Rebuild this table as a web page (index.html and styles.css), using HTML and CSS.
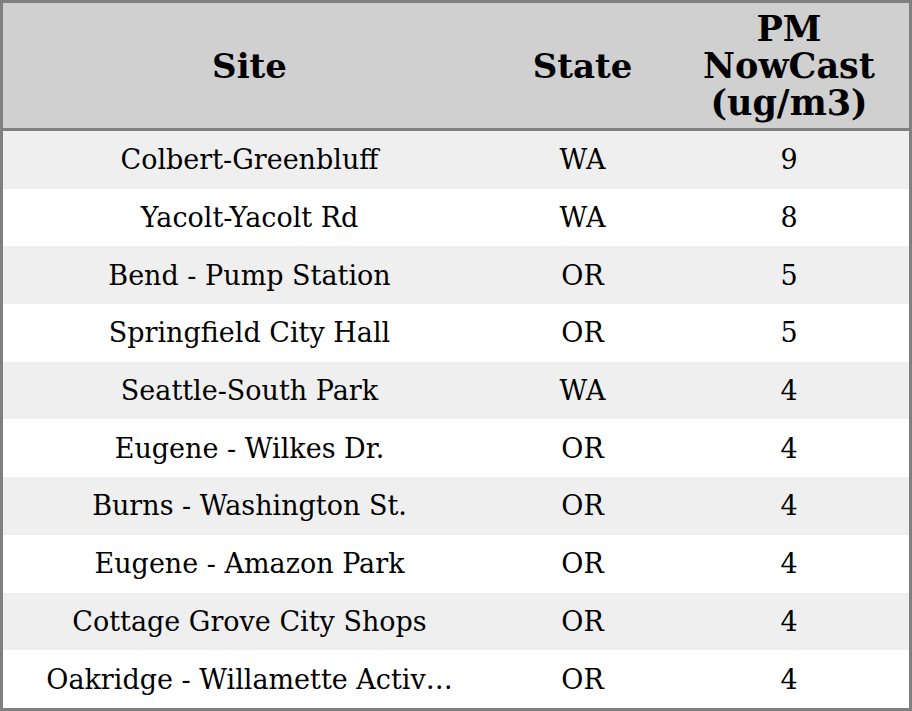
FILE: index.html
```html
<!DOCTYPE html>
<html>
<head>
<meta charset="utf-8">
<link rel="stylesheet" href="styles.css">
</head>
<body>
<div class="frame">
<table class="grid">
<colgroup><col class="c-site"><col class="c-state"><col class="c-pm"></colgroup>
<thead>
<tr><th>Site</th><th>State</th><th class="h-pm">PM NowCast (ug/m3)</th></tr>
</thead>
<tbody>
<tr><td>Colbert-Greenbluff</td><td>WA</td><td>9</td></tr>
<tr><td>Yacolt-Yacolt Rd</td><td>WA</td><td>8</td></tr>
<tr><td>Bend - Pump Station</td><td>OR</td><td>5</td></tr>
<tr><td>Springfield City Hall</td><td>OR</td><td>5</td></tr>
<tr><td>Seattle-South Park</td><td>WA</td><td>4</td></tr>
<tr><td>Eugene - Wilkes Dr.</td><td>OR</td><td>4</td></tr>
<tr><td>Burns - Washington St.</td><td>OR</td><td>4</td></tr>
<tr><td>Eugene - Amazon Park</td><td>OR</td><td>4</td></tr>
<tr><td>Cottage Grove City Shops</td><td>OR</td><td>4</td></tr>
<tr><td>Oakridge - Willamette Activ…</td><td>OR</td><td>4</td></tr>
</tbody>
</table>
</div>
</body>
</html>
```
FILE: styles.css
```css
html, body { margin: 0; padding: 0; background: #fff; }
.frame {
  width: 906px;
  height: 705px;
  border: 3px solid #808080;
  overflow: hidden;
}
.grid {
  width: 906px;
  border-collapse: collapse;
  table-layout: fixed;
  font-family: "DejaVu Serif", serif;
  color: #000;
}
.c-site { width: 493px; }
.c-state { width: 173px; }
.c-pm { width: 240px; }
.grid th {
  height: 125px;
  padding: 0 20px;
  background: #d0d0d0;
  font-size: 34px;
  font-weight: bold;
  line-height: 36px;
  border-bottom: 3px solid #808080;
  text-align: center;
  vertical-align: middle;
}
.grid th.h-pm {
  font-size: 35px;
  line-height: 37px;
  padding: 0 10px;
}
.grid td {
  height: 57.7px;
  padding: 0;
  font-size: 27px;
  text-align: center;
  vertical-align: middle;
  white-space: nowrap;
}
.grid tbody tr:nth-child(odd) td { background: #efefef; }
.grid tbody tr:nth-child(even) td { background: #fff; }
```
